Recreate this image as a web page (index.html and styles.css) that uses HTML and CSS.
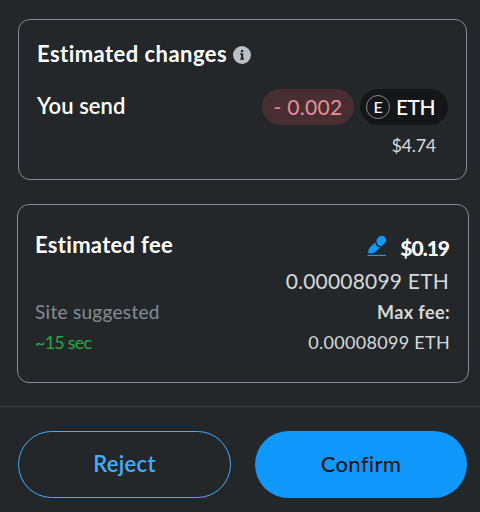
FILE: index.html
```html
<!DOCTYPE html>
<html lang="en">
<head>
<meta charset="utf-8">
<title>Confirm transaction</title>
<link rel="stylesheet" href="styles.css">
</head>
<body>
<main class="screen">
  <section class="card changes">
    <h2 class="title"><span class="t-changes">Estimated changes</span>
      <svg class="info" viewBox="0 0 18 18"><circle cx="9" cy="9" r="9" fill="#bbc0c5"/><path d="M7.900 4h2.300v2.200H7.900zM7.200 7.300h3v5h.8v1.500H7.200v-1.500h.8V8.800h-.8z" fill="#24272a"/></svg>
    </h2>
    <div class="send">
      <span class="t-send">You send</span>
      <div class="pills">
        <span class="pill amount"><span class="t-amount">- 0.002</span></span>
        <span class="pill token"><span class="avatar">E</span><span class="t-eth">ETH</span></span>
      </div>
    </div>
    <div class="fiat"><span class="t-fiat">$4.74</span></div>
  </section>
  <section class="card fee">
    <div class="row main"><span class="t-fee">Estimated fee</span>
      <span class="cost"><svg class="edit" viewBox="0 0 20 20"><path d="M1.200 17.300Q.8 14 3 11.200L8.300 6.300A5.500 5.500 0 0 0 13.300 11.500L7.800 16.500Q5 18 1.200 17.300Z" fill="#1098fc"/><path d="M9.500 5A5 5 0 0 0 14.700 10.200L17.200 7.800A4.400 4.400 0 1 0 11 1.800Q9.500 3 9.500 5Z" fill="#1098fc"/><path d="M.5 19.400h18.500" stroke="#1098fc" stroke-width="1.200"/></svg><span class="t-usd">$0.19</span></span>
    </div>
    <div class="row native"><span class="t-native">0.00008099 ETH</span></div>
    <div class="row small"><span class="t-site">Site suggested</span><span class="t-max">Max fee:</span></div>
    <div class="row small"><span class="t-time">~15 sec</span><span class="t-maxval">0.00008099 ETH</span></div>
  </section>
  <footer class="actions">
    <button class="btn reject"><span class="t-reject">Reject</span></button>
    <button class="btn confirm"><span class="t-confirm">Confirm</span></button>
  </footer>
</main>
</body>
</html>
```
FILE: styles.css
```css
* { box-sizing: border-box; }
body { margin: 0; background: #24272a; color: #fff; font: 400 21px/30px Lato, "Liberation Sans", sans-serif; font-variant-ligatures: none; }
.screen { width: 480px; height: 512px; padding-top: 19px; overflow: hidden; }
span { white-space: nowrap; }
.card { border: 1px solid #848c96; border-radius: 12px; }
.changes { height: 161px; margin: 0 13px 0 18px; padding: 19px 18px; }
.title { display: flex; align-items: center; gap: 5px; margin: 0; height: 30px; font-size: 22px; font-weight: 700; }
.t-changes { width: 191px; letter-spacing: .45px; }
.info { width: 18px; height: 18px; margin-top: 2px; }
.send { display: flex; justify-content: space-between; height: 36px; margin-top: 20px; }
.t-send { line-height: 34px; font-size: 22px; font-weight: 600; letter-spacing: .05px; }
.pills { display: flex; gap: 6px; }
.pill { display: flex; align-items: center; height: 36px; border-radius: 18px; }
.amount { width: 92px; justify-content: center; background: #482d33; color: #e88f97; }
.t-amount { letter-spacing: .3px; }
.token { width: 88px; padding-left: 6px; gap: 6px; background: #141618; }
.t-eth { font-weight: 500; letter-spacing: -.5px; }
.avatar { width: 24px; height: 24px; border: 1px solid #848c96; border-radius: 50%; font-size: 16px; font-weight: 500; line-height: 21px; text-align: center; }
.fiat { display: flex; justify-content: flex-end; padding-right: 12px; margin-top: 5px; font-size: 18px; letter-spacing: -.3px; color: #d6d9dc; }
.fee { height: 179px; margin: 24px 11px 0 17px; padding: 24px 18px 0 18px; }
.row { display: flex; justify-content: space-between; align-items: center; color: #d6d9dc; }
.main { height: 34px; color: #fff; }
.t-fee { font-size: 22px; font-weight: 700; letter-spacing: .3px; margin: -3px 0 0 -1px; }
.cost { display: flex; align-items: center; gap: 13px; margin: 3px 1px 0 0; }
.edit { width: 20px; height: 20px; margin-top: -3px; }
.t-usd { font-weight: 900; letter-spacing: -1px; }
.native { height: 34px; justify-content: flex-end; padding: 2px 1px 0 0; letter-spacing: .2px; }
.small { height: 30px; font-size: 18px; }
.t-site { font-size: 19px; letter-spacing: .3px; margin-left: -1px; color: #848c96; }
.t-max { font-weight: 700; letter-spacing: .4px; }
.t-maxval { letter-spacing: .3px; }
.t-time { margin-left: -1px; letter-spacing: -.8px; color: #28a745; }
.actions { display: flex; gap: 24px; margin-top: 23px; border-top: 1px solid #3b4046; padding: 24px 13px 0 18px; }
.btn { height: 67px; border-radius: 34px; font: inherit; font-size: 22px; letter-spacing: .3px; padding: 0 0 1px; }
.reject { width: 213px; border: 1px solid #43aefc; background: none; color: #43aefc; font-weight: 600; }
.confirm { width: 212px; border: 0; background: #1098fc; color: #141618; font-weight: 500; }
```
